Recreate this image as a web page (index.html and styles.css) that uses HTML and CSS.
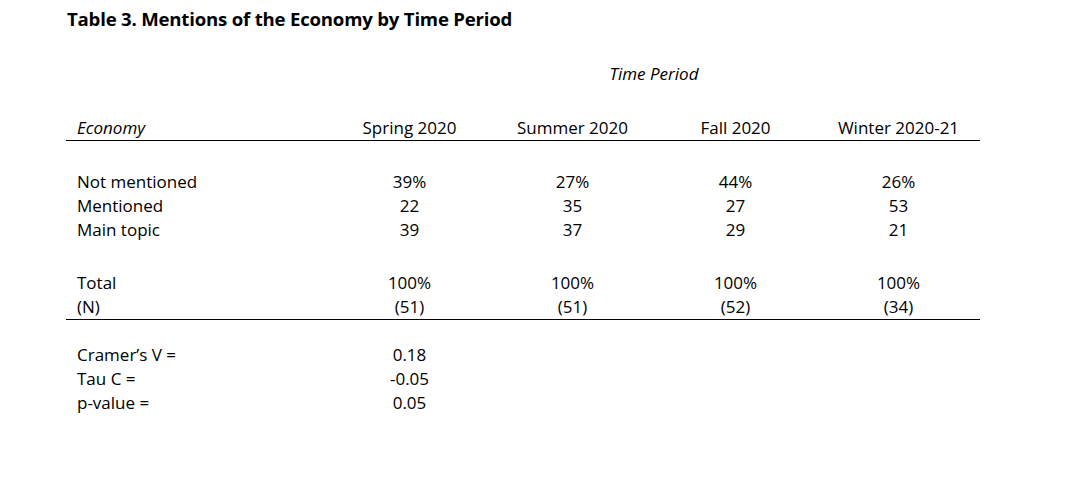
FILE: index.html
```html
<!DOCTYPE html>
<html lang="en">
<head>
<meta charset="utf-8">
<title>Table 3</title>
<link rel="stylesheet" href="styles.css">
</head>
<body>
<div class="page">
  <h1 class="title">Table 3. Mentions of the Economy by Time Period</h1>
  <div class="row period-row">
    <div class="cell label"></div>
    <div class="cell span4 italic">Time Period</div>
  </div>
  <div class="row head-row">
    <div class="cell label italic">Economy</div>
    <div class="cell">Spring 2020</div>
    <div class="cell">Summer 2020</div>
    <div class="cell">Fall 2020</div>
    <div class="cell">Winter 2020-21</div>
  </div>
  <div class="group body-group">
    <div class="row">
      <div class="cell label">Not mentioned</div>
      <div class="cell">39%</div>
      <div class="cell">27%</div>
      <div class="cell">44%</div>
      <div class="cell">26%</div>
    </div>
    <div class="row">
      <div class="cell label">Mentioned</div>
      <div class="cell">22</div>
      <div class="cell">35</div>
      <div class="cell">27</div>
      <div class="cell">53</div>
    </div>
    <div class="row">
      <div class="cell label">Main topic</div>
      <div class="cell">39</div>
      <div class="cell">37</div>
      <div class="cell">29</div>
      <div class="cell">21</div>
    </div>
  </div>
  <div class="group total-group">
    <div class="row">
      <div class="cell label">Total</div>
      <div class="cell">100%</div>
      <div class="cell">100%</div>
      <div class="cell">100%</div>
      <div class="cell">100%</div>
    </div>
    <div class="row">
      <div class="cell label">(N)</div>
      <div class="cell">(51)</div>
      <div class="cell">(51)</div>
      <div class="cell">(52)</div>
      <div class="cell">(34)</div>
    </div>
  </div>
  <div class="group stats-group">
    <div class="row">
      <div class="cell label">Cramer’s V =</div>
      <div class="cell">0.18</div>
    </div>
    <div class="row">
      <div class="cell label">Tau C =</div>
      <div class="cell">-0.05</div>
    </div>
    <div class="row">
      <div class="cell label">p-value =</div>
      <div class="cell">0.05</div>
    </div>
  </div>
</div>
</body>
</html>
```

FILE: styles.css
```css
html, body {
  margin: 0;
  padding: 0;
  background: #ffffff;
}

.page {
  padding: 7px 0 0 66px;
  font-family: "Open Sans", "Liberation Sans", sans-serif;
  font-size: 17px;
  line-height: 24px;
  color: #000000;
  width: 914px;
}

.title {
  margin: 0;
  padding-left: 1px;
  font-size: 18.6px;
  font-weight: 700;
  line-height: 24px;
  letter-spacing: -0.2px;
}

.row {
  display: grid;
  grid-template-columns: 262px repeat(4, 163px);
  height: 24px;
}

.cell {
  text-align: center;
  white-space: nowrap;
}

.cell.label {
  text-align: left;
  padding-left: 11px;
}

.span4 {
  grid-column: 2 / span 4;
}

.italic {
  font-style: italic;
}

.period-row {
  margin-top: 31px;
}

.head-row {
  margin-top: 30px;
  border-bottom: 1px solid #000000;
}

.body-group {
  margin-top: 29px;
}

.total-group {
  margin-top: 29px;
  border-bottom: 1px solid #000000;
}

.stats-group {
  margin-top: 23px;
}
```
